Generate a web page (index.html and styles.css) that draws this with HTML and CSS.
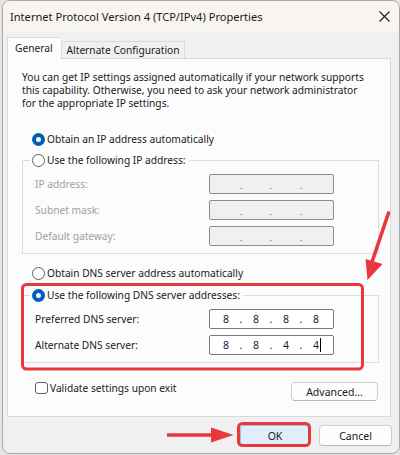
FILE: index.html
```html
<!DOCTYPE html>
<html>
<head>
<meta charset="utf-8">
<link rel="stylesheet" href="styles.css">
</head>
<body>
<div class="window">
  <div class="titlebar">
    <span class="title">Internet Protocol Version 4 (TCP/IPv4) Properties</span>
    <svg class="close" width="11" height="11" viewBox="0 0 11 11"><path d="M0.5 0.5 L10.5 10.5 M10.5 0.5 L0.5 10.5" stroke="#1a1a1a" stroke-width="1.1" fill="none"/></svg>
  </div>
  <div class="content">
    <div class="tabs">
      <div class="tab active">General</div>
      <div class="tab">Alternate Configuration</div>
    </div>
    <div class="panel">
      <p class="desc">You can get IP settings assigned automatically if your network supports<br>this capability. Otherwise, you need to ask your network administrator<br>for the appropriate IP settings.</p>
      <div class="radio-row r1"><span class="radio on"></span><span>Obtain an IP address automatically</span></div>
      <div class="group g1">
        <div class="legend"><span class="radio"></span><span>Use the following IP address:</span></div>
        <div class="field first disabled"><span class="label">IP address:</span><div class="ip off"><span class="d"></span><span class="dot">.</span><span class="d"></span><span class="dot">.</span><span class="d"></span><span class="dot">.</span><span class="d"></span></div></div>
        <div class="field disabled"><span class="label">Subnet mask:</span><div class="ip off"><span class="d"></span><span class="dot">.</span><span class="d"></span><span class="dot">.</span><span class="d"></span><span class="dot">.</span><span class="d"></span></div></div>
        <div class="field disabled"><span class="label">Default gateway:</span><div class="ip off"><span class="d"></span><span class="dot">.</span><span class="d"></span><span class="dot">.</span><span class="d"></span><span class="dot">.</span><span class="d"></span></div></div>
      </div>
      <div class="radio-row r3"><span class="radio"></span><span>Obtain DNS server address automatically</span></div>
      <div class="group g2">
        <div class="legend"><span class="radio on"></span><span>Use the following DNS server addresses:</span></div>
        <div class="field first"><span class="label">Preferred DNS server:</span><div class="ip"><span class="d">8</span><span class="dot">.</span><span class="d">8</span><span class="dot">.</span><span class="d">8</span><span class="dot">.</span><span class="d">8</span></div></div>
        <div class="field"><span class="label">Alternate DNS server:</span><div class="ip"><span class="d">8</span><span class="dot">.</span><span class="d">8</span><span class="dot">.</span><span class="d">4</span><span class="dot">.</span><span class="d">4<i class="caret"></i></span></div></div>
      </div>
      <div class="bottom-row">
        <label class="check"><span class="box"></span><span>Validate settings upon exit</span></label>
        <button class="btn adv">Advanced...</button>
      </div>
    </div>
    <div class="footer">
      <button class="btn ok">OK</button>
      <button class="btn cancel">Cancel</button>
    </div>
  </div>
</div>
<svg class="annot" width="400" height="455" viewBox="0 0 400 455">
  <rect x="22.5" y="284.5" width="340" height="84.5" rx="4" fill="none" stroke="#e8383d" stroke-width="3"/>
  <rect x="238.5" y="423.5" width="71" height="22" rx="4" fill="none" stroke="#e8383d" stroke-width="3"/>
  <path d="M388.5 213 L372 262" stroke="#e8383d" stroke-width="3.6" stroke-linecap="round" fill="none"/>
  <path d="M365.5 259 L382.5 264 L367.5 280 Z" fill="#e8383d"/>
  <path d="M167 435 L215 435" stroke="#e8383d" stroke-width="3.6" fill="none"/>
  <path d="M211 427.5 L233.5 435 L211 442.5 Z" fill="#e8383d"/>
</svg>
</body>
</html>
```
FILE: styles.css
```css
* { box-sizing: border-box; margin: 0; padding: 0; }
html, body { width: 400px; height: 455px; overflow: hidden; }
body {
  background: #e4e4e4;
  font-family: "Noto Sans", "Open Sans", sans-serif;
  font-size: 10.2px;
  color: #1a1a1a;
  position: relative;
}
.window {
  margin-left: 2px;
  width: 398px;
  height: 454px;
  background: #f0f0f0;
  border: 1px solid #a8a8a8;
  border-radius: 8px;
  overflow: hidden;
}
.titlebar {
  height: 30px;
  background: #f8f5ef;
  display: flex;
  align-items: center;
  padding-left: 7px;
}
.title { font-size: 11.1px; color: #1a1a1a; }
.close { margin-left: auto; margin-right: 9px; }
.content { padding: 6px 7px 0 4px; }
.tabs { display: flex; align-items: flex-end; height: 21px; }
.tab {
  height: 17px;
  padding: 0 4px 0 5px;
  border: 1px solid #d9d9d9;
  border-bottom: none;
  display: flex;
  align-items: center;
  background: #f0f0f0;
}
.tab.active {
  height: 22px;
  margin-bottom: -1px;
  padding: 0 8px 2px 7px;
  background: #fcfcfc;
  position: relative;
  z-index: 1;
  border-right: none;
}
.panel {
  width: 384px;
  height: 359px;
  background: #fcfcfc;
  border: 1px solid #d9d9d9;
  padding: 12px 11px 0 14px;
}
.desc { line-height: 13px; }
.radio-row, .legend { display: flex; align-items: center; height: 14px; }
.radio-row { margin-left: 10px; }
.r1 { margin-top: 22px; }
.r3 { margin-top: 12px; }
.radio {
  width: 13px; height: 13px;
  border-radius: 50%;
  border: 1px solid #5c5c5c;
  background: #fff;
  margin-right: 2px;
  flex: none;
}
.radio.on {
  border: 4px solid #005fb8;
  background: #fff;
}
.group {
  border: 1px solid #dcdcdc;
  display: flex;
  flex-direction: column;
  padding: 0 0 7px 12px;
}
.g1 { margin-top: 14px; }
.g2 { margin-top: 15px; }
.legend {
  align-self: flex-start;
  margin: -8px 0 0 -5px;
  padding: 0 3px 0 2px;
  background: #fcfcfc;
}
.field { display: flex; align-items: center; height: 20px; margin-top: 6px; }
.field.first { margin-top: 7px; }
.label { width: 174px; }
.disabled .label { color: #a0a0a0; }
.ip {
  width: 125px; height: 20px;
  border: 1px solid #7a7a7a;
  border-radius: 2px;
  background: #fff;
  display: flex;
  align-items: center;
  padding-left: 4px;
  font-size: 10.5px;
  color: #1a1a3c;
}
.ip.off { background: #f0f0f0; border-color: #8c8c8c; }
.ip .d { width: 24px; text-align: center; position: relative; }
.ip .dot { width: 6px; text-align: center; }
.ip.off .dot { color: #4a4a70; font-size: 9px; padding-top: 2px; }
.caret {
  position: absolute;
  left: 16px; top: 0px;
  width: 1px; height: 14px;
  background: #000;
}
.bottom-row {
  margin-top: 19px;
  display: flex;
  justify-content: space-between;
  align-items: flex-start;
}
.check { display: flex; align-items: center; padding-left: 13px; height: 12px; margin-top: 0; }
.box {
  width: 13px; height: 12px;
  border: 1px solid #5c5c5c;
  border-radius: 3px;
  background: #fff;
  margin-right: 2px;
}
.btn {
  font-family: inherit;
  font-size: 10.5px;
  color: #1a1a1a;
  background: #fdfdfd;
  border: 1px solid #cfcfcf;
  border-bottom-color: #b8b8b8;
  border-radius: 4px;
}
.adv { width: 87px; height: 19px; margin-right: 1px; }
.footer { display: flex; justify-content: flex-end; gap: 9px; margin-top: 8px; }
.ok { width: 70px; height: 21px; background: #e1edf9; border-color: #9fc3e8; }
.cancel { width: 73px; height: 21px; }
.annot { position: absolute; left: 0; top: 0; pointer-events: none; }
```
